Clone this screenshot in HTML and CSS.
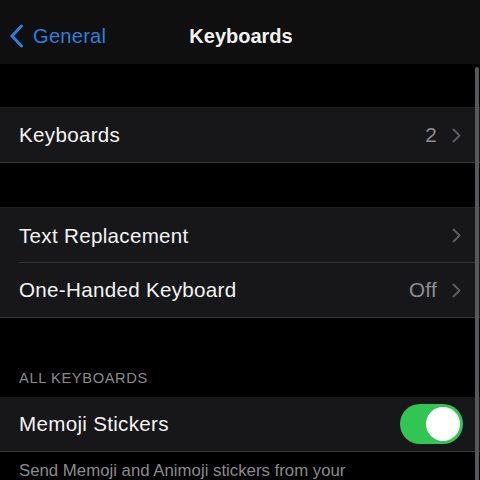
FILE: index.html
```html
<!DOCTYPE html>
<html>
<head>
<meta charset="utf-8">
<link rel="stylesheet" href="styles.css">
</head>
<body>
<div class="screen">
  <header class="nav">
    <div class="nav-back">
      <svg class="back-chev" width="16" height="24" viewBox="0 0 16 24"><path d="M12.5 2 L3 12 L12.5 22" fill="none" stroke="#2b7fdc" stroke-width="3" stroke-linecap="round" stroke-linejoin="round"/></svg>
      <span class="back-label">General</span>
    </div>
    <div class="nav-title">Keyboards</div>
    <div class="nav-spacer"></div>
  </header>

  <div class="content">
    <div class="gap gap-top"></div>
    <section class="group">
      <div class="row">
        <span class="label">Keyboards</span>
        <span class="value">2</span>
        <svg class="chev" width="9" height="15" viewBox="0 0 9 15"><path d="M1.5 1.5 L7.5 7.5 L1.5 13.5" fill="none" stroke="#5c5c60" stroke-width="2" stroke-linecap="round" stroke-linejoin="round"/></svg>
      </div>
    </section>
    <div class="gap gap-mid"></div>
    <section class="group">
      <div class="row row-inset">
        <span class="label">Text Replacement</span>
        <svg class="chev" width="9" height="15" viewBox="0 0 9 15"><path d="M1.5 1.5 L7.5 7.5 L1.5 13.5" fill="none" stroke="#5c5c60" stroke-width="2" stroke-linecap="round" stroke-linejoin="round"/></svg>
      </div>
      <div class="row">
        <span class="label">One-Handed Keyboard</span>
        <span class="value">Off</span>
        <svg class="chev" width="9" height="15" viewBox="0 0 9 15"><path d="M1.5 1.5 L7.5 7.5 L1.5 13.5" fill="none" stroke="#5c5c60" stroke-width="2" stroke-linecap="round" stroke-linejoin="round"/></svg>
      </div>
    </section>
    <div class="section-header">ALL KEYBOARDS</div>
    <section class="group group-bordered">
      <div class="row">
        <span class="label">Memoji Stickers</span>
        <span class="toggle"><span class="knob"></span></span>
      </div>
    </section>
    <p class="footer">Send Memoji and Animoji stickers from your</p>
  </div>
  <div class="scrollbar"></div>
</div>
</body>
</html>
```

FILE: styles.css
```css
* { box-sizing: border-box; }
html, body {
  margin: 0;
  padding: 0;
  background: #000;
}
body {
  font-family: "Liberation Sans", Arial, sans-serif;
  color: #fff;
  width: 480px;
  height: 480px;
  overflow: hidden;
}
.screen {
  position: relative;
  width: 480px;
  height: 480px;
  overflow: hidden;
  display: flex;
  flex-direction: column;
}
.nav {
  height: 64px;
  flex: none;
  background: #0f0f10;
  display: grid;
  grid-template-columns: 1fr auto 1fr;
  align-items: center;
  padding-top: 8px;
}
.nav-back {
  display: flex;
  align-items: center;
  gap: 8px;
  padding-left: 9px;
  color: #2b7fdc;
  font-size: 20.2px;
  letter-spacing: 0.2px;
}
.back-chev { flex: none; }
.nav-title {
  font-size: 20px;
  font-weight: bold;
  color: #f2f2f2;
  padding-left: 2px;
}
.content {
  display: flex;
  flex-direction: column;
}
.gap-top { height: 43px; }
.gap-mid { height: 44px; }
.group {
  background: #171719;
  border-top: 1px solid #1e1e20;
}
.group-bordered { border-top: none; }
.row {
  height: 55px;
  display: flex;
  align-items: center;
  padding: 0 19px;
  font-size: 20.6px;
  position: relative;
}
.group .row:last-child { border-bottom: 1px solid #39393c; height: 55px; }
.row-inset::after {
  content: "";
  position: absolute;
  left: 19px;
  right: 0;
  bottom: 0;
  height: 1px;
  background: #333336;
}
.label { flex: 1; color: #f4f4f4; letter-spacing: 0.3px; }
.value {
  color: #8d8d92;
  margin-right: 15px;
  letter-spacing: 0.3px;
}
.chev { flex: none; }
.section-header {
  height: 79px;
  display: flex;
  align-items: flex-end;
  padding: 0 19px 11px;
  font-size: 14.7px;
  letter-spacing: 0.6px;
  color: #8a8a8e;
}
.toggle {
  width: 63px;
  height: 40px;
  border-radius: 20px;
  background: #31c553;
  display: flex;
  align-items: center;
  justify-content: flex-end;
  padding-right: 3px;
  margin-right: -2px;
}
.knob {
  width: 34px;
  height: 34px;
  border-radius: 50%;
  background: #fff;
}
.footer {
  margin: 0;
  padding: 9px 19px 0;
  font-size: 16.8px;
  color: #8a8a8e;
}
.scrollbar {
  position: absolute;
  right: 1px;
  top: 67px;
  bottom: 0;
  width: 4px;
  background: #58585b;
  border-radius: 2px 2px 0 0;
}
```
